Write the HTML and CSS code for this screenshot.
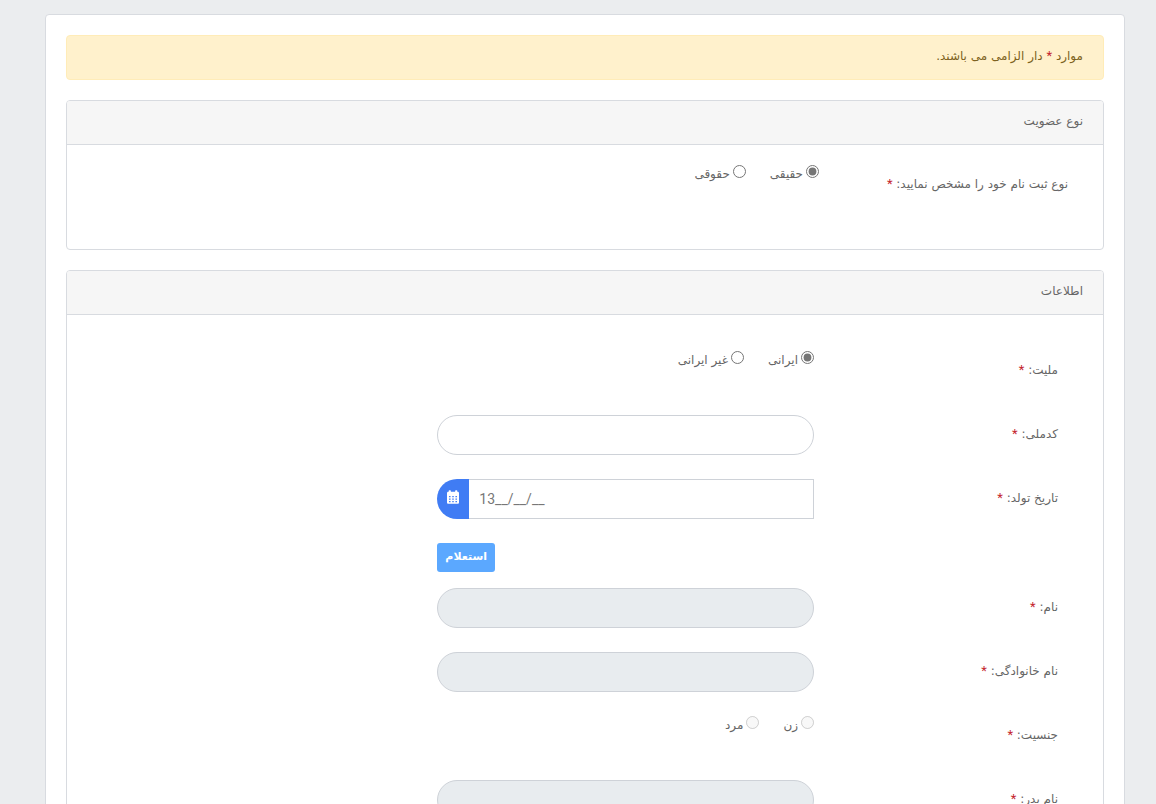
FILE: index.html
```html
<!DOCTYPE html>
<html lang="fa" dir="rtl">
<head>
    <meta charset="UTF-8">
    <meta name="viewport" content="width=device-width, initial-scale=1.0">
    <title>ثبت نام</title>
    <link rel="stylesheet" href="styles.css">
</head>
<body>

    <form class="container">
        <div class="alert">موارد <span class="required">*</span> دار الزامی می باشند.</div>

        <section class="card">
            <h2 class="card-header">نوع عضویت</h2>
            <div class="card-body">
                <div class="form-row" role="group" aria-labelledby="typeLabel">
                    <span class="label" id="typeLabel">نوع ثبت نام خود را مشخص نمایید: <span class="required">*</span></span>
                    <div class="field radios">
                        <label><input type="radio" name="memberType" checked> حقیقی</label>
                        <label><input type="radio" name="memberType"> حقوقی</label>
                    </div>
                </div>
            </div>
        </section>

        <section class="card">
            <h2 class="card-header">اطلاعات</h2>
            <div class="card-body info">
                <div class="form-row" role="group" aria-labelledby="nationLabel">
                    <span class="label" id="nationLabel">ملیت: <span class="required">*</span></span>
                    <div class="field radios">
                        <label><input type="radio" name="nationality" checked> ایرانی</label>
                        <label><input type="radio" name="nationality"> غیر ایرانی</label>
                    </div>
                </div>
                <div class="form-row">
                    <label class="label" for="nationalCode">کدملی: <span class="required">*</span></label>
                    <div class="field">
                        <input type="text" class="form-control" id="nationalCode">
                    </div>
                </div>
                <div class="form-row">
                    <label class="label" for="birthDate">تاریخ تولد: <span class="required">*</span></label>
                    <div class="field input-group">
                        <input type="text" class="form-control date" id="birthDate" dir="ltr" placeholder="13__/__/__">
                        <button type="button" class="calendar-btn" aria-label="تقویم">
                            <svg width="12" height="14" viewBox="0 0 448 512" fill="#fff">
                                <path fill-rule="evenodd" d="M0 160V464c0 26.500 21.500 48 48 48h352c26.500 0 48-21.500 48-48V112c0-26-21-48-48-48h-16V24c0-13-10-24-24-24h-32c-13 0-24 11-24 24v40H144V24c0-13-10-24-24-24H88C75 0 64 11 64 24v40H48C21 64 0 86 0 112zM76 214h56v52H76zM196 214h56v52h-56zM316 214h56v52h-56zM76 310h56v52H76zM196 310h56v52h-56zM316 310h56v52h-56zM76 406h56v42H76zM196 406h56v42h-56zM316 406h56v42h-56z"/>
                            </svg>
                        </button>
                    </div>
                </div>
                <div class="form-row inquiry">
                    <div class="field">
                        <button type="button" class="btn">استعلام</button>
                    </div>
                </div>
                <div class="form-row">
                    <label class="label" for="firstName">نام: <span class="required">*</span></label>
                    <div class="field">
                        <input type="text" class="form-control" id="firstName" disabled>
                    </div>
                </div>
                <div class="form-row">
                    <label class="label" for="lastName">نام خانوادگی: <span class="required">*</span></label>
                    <div class="field">
                        <input type="text" class="form-control" id="lastName" disabled>
                    </div>
                </div>
                <div class="form-row" role="group" aria-labelledby="genderLabel">
                    <span class="label" id="genderLabel">جنسیت: <span class="required">*</span></span>
                    <div class="field radios">
                        <label><input type="radio" name="gender" disabled> زن</label>
                        <label><input type="radio" name="gender" disabled> مرد</label>
                    </div>
                </div>
                <div class="form-row">
                    <label class="label" for="fatherName">نام پدر: <span class="required">*</span></label>
                    <div class="field">
                        <input type="text" class="form-control" id="fatherName" disabled>
                    </div>
                </div>
            </div>
        </section>
    </form>

</body>
</html>
```
FILE: styles.css
```css
* {
    box-sizing: border-box;
}
body {
    margin: 0;
    background-color: #ebedef;
    color: #666;
    font-family: "DejaVu Sans", sans-serif;
    font-size: 12px;
    line-height: 20px;
}
.container {
    margin: 14px 31px 0 45px;
    padding: 20px;
    background-color: #fff;
    border: 1px solid #d8dbe0;
    border-radius: 4px;
}
.alert {
    margin-bottom: 20px;
    padding: 10px 20px 13px;
    background-color: #fff1cc;
    border: 1px solid #ffecb8;
    border-radius: 4px;
    color: #7d6220;
}
.required {
    color: #c4262e;
    font-family: Roboto, sans-serif;
    font-size: 13px;
}
.card {
    margin-bottom: 20px;
    border: 1px solid #d8dbe0;
    border-radius: 4px;
}
.card-header {
    margin: 0;
    padding: 10px 20px 13px;
    background-color: #f6f6f6;
    border-bottom: 1px solid #d8dbe0;
    border-radius: 3px 3px 0 0;
    font-size: 12px;
    font-weight: normal;
}
.card-body {
    padding: 20px 20px 0;
}
.card-body.info {
    padding: 36px 30px 0;
}
.form-row {
    display: grid;
    grid-template-columns: 3fr 5fr 4fr;
    min-height: 40px;
    margin-bottom: 24px;
}
.card-body:not(.info) .form-row {
    margin-bottom: 44px;
}
.label {
    padding: 9px 15px 0 0;
    white-space: nowrap;
}
.field {
    grid-column: 2;
    padding: 0 15px;
}
.radios {
    display: flex;
    gap: 24px;
}
.radios label {
    display: flex;
    align-items: flex-start;
    gap: 3px;
    line-height: 18px;
}
.radios input {
    margin: 0;
    accent-color: #767676;
}
.form-control {
    display: block;
    width: 100%;
    height: 40px;
    padding: 0 10px;
    background-color: #fff;
    border: 1px solid #ced2d8;
    border-radius: 20px;
    color: #768192;
    font-family: Roboto, sans-serif;
    font-size: 14px;
}
.form-control:disabled {
    background-color: #e8ecef;
}
.form-control::placeholder {
    color: #777;
}
.input-group {
    display: flex;
}
.date {
    flex: 1;
    min-width: 0;
    border-radius: 0;
    border-left: 0;
}
.calendar-btn {
    width: 32px;
    height: 40px;
    padding: 0 0 6px;
    background-color: #407cf4;
    border: none;
    border-radius: 20px 0 0 20px;
    cursor: pointer;
}
.calendar-btn svg {
    vertical-align: middle;
}
.inquiry {
    min-height: 29px;
    margin-bottom: 16px;
}
.inquiry .field {
    text-align: left;
}
.btn {
    height: 29px;
    padding: 0 8px 3px;
    background-color: #5ba8ff;
    border: none;
    border-radius: 3px;
    color: #fff;
    font-family: "DejaVu Sans", sans-serif;
    font-size: 11px;
    font-weight: bold;
    cursor: pointer;
}
```
